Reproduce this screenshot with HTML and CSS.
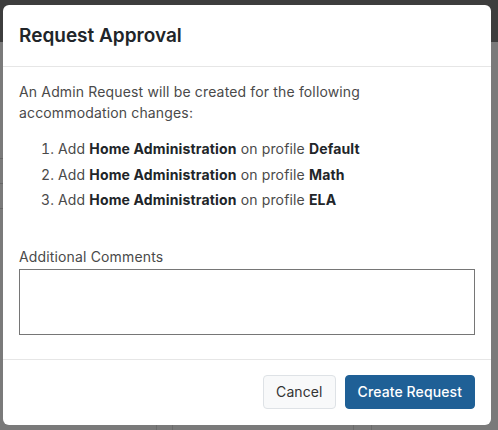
FILE: index.html
```html
<!DOCTYPE html>
<html lang="en">

<head>
  <meta charset="UTF-8">
  <meta name="viewport" content="width=device-width, initial-scale=1.0">
  <title>Request Approval</title>
  <link rel="stylesheet" href="styles.css">
</head>

<body>
  <div class="page">
    <header class="topbar"></header>
    <div class="grid">
      <div class="row"></div>
      <div class="row"></div>
      <div class="row"></div>
    </div>
    <div class="cols">
      <span class="col" style="width: 157px"></span>
      <span class="col" style="width: 16px"></span>
      <span class="col" style="width: 181px"></span>
      <span class="col" style="width: 18px"></span>
    </div>
  </div>

  <div class="modal" role="dialog">
    <header class="modal-header">
      <h2 class="modal-title">Request Approval</h2>
    </header>

    <div class="modal-body">
      <p>An Admin Request will be created for the following accommodation changes:</p>
      <ol class="changes">
        <li>Add <b>Home Administration</b> on profile <b>Default</b></li>
        <li>Add <b>Home Administration</b> on profile <b>Math</b></li>
        <li>Add <b>Home Administration</b> on profile <b>ELA</b></li>
      </ol>

      <label class="field">
        <span>Additional Comments</span>
        <textarea class="comments"></textarea>
      </label>
    </div>

    <footer class="modal-footer">
      <button class="btn btn-light">Cancel</button>
      <button class="btn btn-primary">Create Request</button>
    </footer>
  </div>
</body>

</html>
```

FILE: styles.css
```css
*,
*::before,
*::after {
  box-sizing: border-box;
}

body {
  font-family: Inter, 'Noto Sans', sans-serif;
  margin: 0;
  height: 430px;
  overflow: hidden;
  background: #7a7a7a;
  color: #222;
}

.page {
  height: 100%;
  display: flex;
  flex-direction: column;
}

.topbar {
  height: 42px;
  background: #3d3d3d;
}

.grid {
  width: 150px;
  padding-top: 92px;
  display: flex;
  flex-direction: column;

  .row {
    height: 25px;
    border-bottom: 1px solid #666;
  }
}

.cols {
  margin-top: auto;
  height: 6px;
  display: flex;

  .col {
    border-right: 1px solid #6c6c6c;
  }
}

.modal {
  position: fixed;
  top: 5px;
  left: 3px;
  width: 488px;
  background: #fff;
  border-radius: 6px;
  display: flex;
  flex-direction: column;
}

.modal-header {
  height: 62px;
  padding: 0 16px;
  display: flex;
  align-items: center;
  border-bottom: 1px solid #e6e6e6;
}

.modal-title {
  margin: 0;
  font-size: 19px;
  font-weight: 600;
  color: #212529;
}

.modal-body {
  padding: 14px 16px 16px;
  font-size: 14px;
  line-height: 21px;
  color: #4a4a4a;
  letter-spacing: .15px;

  p {
    margin: 0 0 13px;
    max-width: 400px;
  }

  b {
    font-weight: 700;
    color: #212529;
  }
}

.changes {
  margin: 0 0 33px;
  padding-left: 39px;

  li {
    line-height: 25.5px;
  }
}

.field {
  display: flex;
  flex-direction: column;
  gap: 2px;
  margin-bottom: 8px;
}

.comments {
  height: 66px;
  border: 1px solid #767676;
  border-radius: 0;
  resize: none;
  margin: 0;
}

.modal-footer {
  border-top: 1px solid #e6e6e6;
  padding: 15px 16px 16px;
  display: flex;
  justify-content: flex-end;
  gap: 9px;
}

.btn {
  height: 34px;
  padding: 0 12px;
  border-radius: 4px;
  font-family: inherit;
  font-size: 14px;
  letter-spacing: .1px;
  cursor: pointer;
}

.btn-light {
  background: #f8f9fa;
  border: 1px solid #dee2e6;
  color: #333;
}

.btn-primary {
  background: #1f6096;
  border: 1px solid #1f6096;
  color: #fff;
  font-weight: 500;
}
```
